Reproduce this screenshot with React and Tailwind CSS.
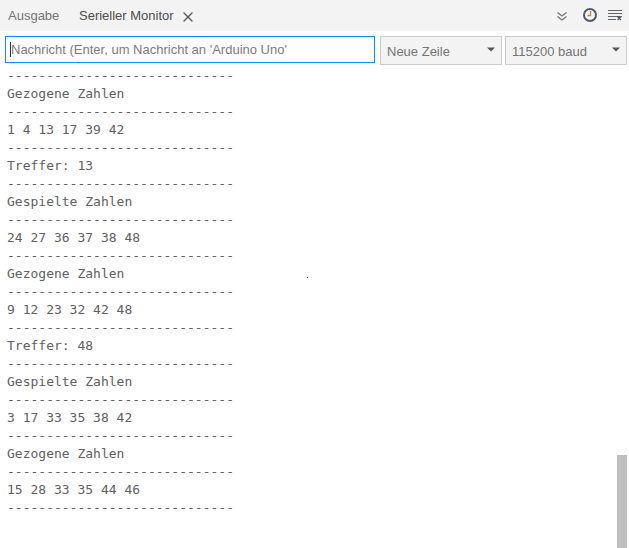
import { X } from "lucide-react";

const lines = [
  "-----------------------------",
  "Gezogene Zahlen",
  "-----------------------------",
  "1 4 13 17 39 42",
  "-----------------------------",
  "Treffer: 13",
  "-----------------------------",
  "Gespielte Zahlen",
  "-----------------------------",
  "24 27 36 37 38 48",
  "-----------------------------",
  "Gezogene Zahlen",
  "-----------------------------",
  "9 12 23 32 42 48",
  "-----------------------------",
  "Treffer: 48",
  "-----------------------------",
  "Gespielte Zahlen",
  "-----------------------------",
  "3 17 33 35 38 42",
  "-----------------------------",
  "Gezogene Zahlen",
  "-----------------------------",
  "15 28 33 35 44 46",
  "-----------------------------",
];

function Caret() {
  return (
    <svg width="8" height="5" viewBox="0 0 8 5">
      <path d="M0 0.500H8L4 4.500Z" fill="#555555" />
    </svg>
  );
}

function Dropdown({ label }) {
  return (
    <div className="w-[122px] h-[29px] flex items-center justify-between pl-[6px] pr-[6px] bg-[#f3f3f3] border border-[#cccccc] text-[13px] text-[#757575]">
      <span className="mt-[2px]">{label}</span>
      <span className="mb-[2px] flex"><Caret /></span>
    </div>
  );
}

export default function App() {
  return (
    <div className="relative w-[629px] h-[548px] overflow-hidden bg-white font-['Liberation_Sans',sans-serif]">
      {/* Tabs */}
      <div className="h-[31px] bg-[#f3f3f3] flex items-stretch text-[13px]">
        <div className="w-[71px] pl-2 pt-[6px] text-[#757575]">Ausgabe</div>
        <div className="w-[131px] pl-2 pt-[6px] border-t border-[#333333] -mt-px flex items-start text-[#4d4d4d]">
          <span>Serieller Monitor</span>
          <X size={16} strokeWidth={1.8} color="#555555" className="ml-[6px] mt-[3px]" />
        </div>
        <div className="ml-auto flex items-center pr-[7px] pb-[1px]">
          <svg width="10" height="9" viewBox="0 0 10 9" fill="none" stroke="#777777" strokeWidth="1.300" className="mt-[2px]">
            <path d="M0.500 0.500L5 4L9.500 0.500M0.500 4.500L5 8L9.500 4.500" />
          </svg>
          <svg width="14" height="14" viewBox="0 0 14 14" fill="none" className="ml-[16px]">
            <circle cx="7" cy="7" r="6" stroke="#4d5b68" strokeWidth="2" />
            <path d="M7.500 3V7.500H4.500" stroke="#c0872f" strokeWidth="1.300" />
          </svg>
          <svg width="14" height="11" viewBox="0 0 14 11" fill="none" stroke="#666666" className="ml-[11px] mt-[1px]">
            <path d="M0 0.500H14M0 3.500H14M0 6.500H14M0 9.500H8" />
            <path d="M9.500 6.500L13 10M13 6.500L9.500 10" stroke="#4d5b68" strokeWidth="1.300" />
          </svg>
        </div>
      </div>

      {/* Input row */}
      <div className="flex items-start pt-[5px] pl-[5px] gap-[3px]">
        <div className="w-[370px] h-[27px] mr-[2px] flex items-center pl-1 border border-[#0a93ee] text-[13px] text-[#7b7b7b]">
          <span className="w-px h-[15px] bg-[#333333] shrink-0" />
          <span>Nachricht (Enter, um Nachricht an 'Arduino Uno'</span>
        </div>
        <Dropdown label="Neue Zeile" />
        <Dropdown label="115200 baud" />
      </div>

      {/* Output */}
      <div className="pt-[2px] pl-[7px] font-['DejaVu_Sans_Mono',monospace] text-[13px] leading-[18px] text-[#616161] whitespace-pre">
        {lines.map((line, i) => (
          <div key={i}>{line}</div>
        ))}
      </div>

      <div className="absolute left-[307px] top-[277px] w-px h-px bg-[#555555]" />
      <div className="absolute left-[617px] top-[455px] w-[10px] h-[93px] bg-[#bfbfbf]" />
    </div>
  );
}
